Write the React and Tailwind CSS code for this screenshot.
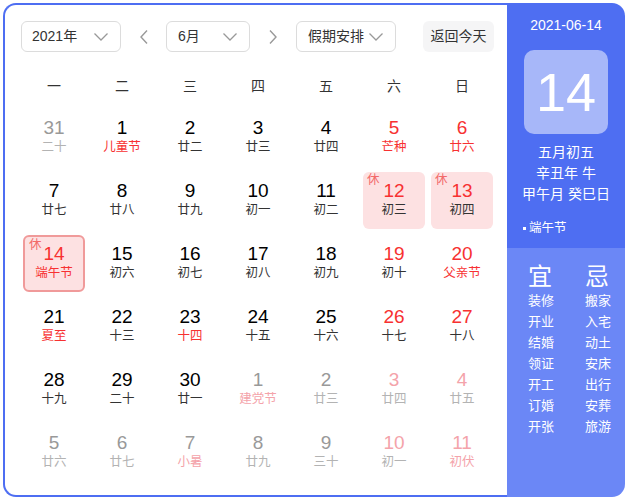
import React from "react";

const FONT = { fontFamily: "'Liberation Sans', 'Noto Sans CJK SC', sans-serif" };

const R = "text-[#f73131]";
const D = "text-[#333]";
const K = "text-[#000]";
const G = "text-[#999]";
const GL = "text-[#b3b3b3]";
const P = "text-[#f4a3aa]";

// [num, lunar, numColor, lunarColor, mark] mark: 'rest' | 'today'
const rows = [
  [["31", "二十", G, GL], ["1", "儿童节", K, R], ["2", "廿二", K, D], ["3", "廿三", K, D], ["4", "廿四", K, D], ["5", "芒种", R, R], ["6", "廿六", R, R]],
  [["7", "廿七", K, D], ["8", "廿八", K, D], ["9", "廿九", K, D], ["10", "初一", K, D], ["11", "初二", K, D], ["12", "初三", R, D, "rest"], ["13", "初四", R, D, "rest"]],
  [["14", "端午节", R, R, "today"], ["15", "初六", K, D], ["16", "初七", K, D], ["17", "初八", K, D], ["18", "初九", K, D], ["19", "初十", R, D], ["20", "父亲节", R, R]],
  [["21", "夏至", K, R], ["22", "十三", K, D], ["23", "十四", K, R], ["24", "十五", K, D], ["25", "十六", K, D], ["26", "十七", R, D], ["27", "十八", R, D]],
  [["28", "十九", K, D], ["29", "二十", K, D], ["30", "廿一", K, D], ["1", "建党节", G, P], ["2", "廿三", G, GL], ["3", "廿四", P, GL], ["4", "廿五", P, GL]],
  [["5", "廿六", G, GL], ["6", "廿七", G, GL], ["7", "小暑", G, P], ["8", "廿九", G, GL], ["9", "三十", G, GL], ["10", "初一", P, GL], ["11", "初伏", P, P]],
];

const weekdays = ["一", "二", "三", "四", "五", "六", "日"];
const yi = ["装修", "开业", "结婚", "领证", "开工", "订婚", "开张"];
const ji = ["搬家", "入宅", "动土", "安床", "出行", "安葬", "旅游"];

function Chevron({ className = "" }) {
  return (
    <svg width="16" height="10" viewBox="0 0 16 10" className={className} fill="none">
      <path d="M1.5 1.5 L8 8 L14.5 1.5" stroke="#999" strokeWidth="1.3" />
    </svg>
  );
}

function Arrow({ dir }) {
  return (
    <svg width="10" height="16" viewBox="0 0 10 16" fill="none">
      {dir === "left" ? (
        <path d="M8 1.5 L2 8 L8 14.5" stroke="#999" strokeWidth="1.4" />
      ) : (
        <path d="M2 1.5 L8 8 L2 14.5" stroke="#999" strokeWidth="1.4" />
      )}
    </svg>
  );
}

function Select({ label, w, pl }) {
  return (
    <div className={`flex items-center justify-between h-[31px] border border-[#dcdcdc] rounded-[6px] bg-white ${w} ${pl} pr-[11px]`}>
      <span className="text-[14px] text-[#333]">{label}</span>
      <Chevron />
    </div>
  );
}

function Cell({ c }) {
  const [num, lunar, nc, lc, mark] = c;
  let box = "";
  if (mark === "rest") box = "bg-[#fde1e2] rounded-[6px]";
  if (mark === "today") box = "bg-[#fde1e2] rounded-[6px] border-2 border-[#f09a9a]";
  return (
    <div className="h-[63px] p-[3px]">
      <div className={`relative h-full flex flex-col items-center justify-center ${box}`}>
        {mark && (
          <span className="absolute left-[4px] top-[0px] text-[12.5px] leading-[17px] text-[#f26a6a]">休</span>
        )}
        <span className={`text-[19px] leading-[22px] ${nc} ${mark === "today" ? "mt-[-2px]" : "mt-[-3px]"}`}>{num}</span>
        <span className={`text-[12.5px] leading-[17px] ${lc}`}>{lunar}</span>
      </div>
    </div>
  );
}

export default function App() {
  return (
    <div style={FONT} className="w-[627px] h-[500px] bg-white pl-[3px] pt-[3px]">
      <div className="flex w-[622px] h-[494px]">
        <div className="w-[504px] h-full border-l-2 border-t-2 border-b-2 border-[#4e6ef2] rounded-l-[13px] pl-[15px] pt-[16px]">
          <div className="flex items-center pl-[1px]">
            <Select label="2021年" w="w-[100px]" pl="pl-[10px]" />
            <div className="w-[45px] flex justify-center">
              <Arrow dir="left" />
            </div>
            <Select label="6月" w="w-[84px]" pl="pl-[11px]" />
            <div className="w-[46px] flex justify-center">
              <Arrow dir="right" />
            </div>
            <Select label="假期安排" w="w-[100px]" pl="pl-[11px]" />
            <div className="ml-[27px] h-[31px] w-[71px] rounded-[6px] bg-[#f5f5f6] flex items-center justify-center text-[14px] text-[#333]">
              返回今天
            </div>
          </div>
          <div className="grid grid-cols-7 w-[476px] mt-[14px]">
            {weekdays.map((w) => (
              <div key={w} className="h-[40px] flex items-center justify-center text-[14px] text-[#333]">
                {w}
              </div>
            ))}
            {rows.flat().map((c, i) => (
              <Cell key={i} c={c} />
            ))}
          </div>
        </div>
        <div className="w-[118px] h-full flex flex-col rounded-r-[13px] overflow-hidden text-white">
          <div className="h-[245px] bg-[#4e6ef2] flex flex-col items-center pt-[12px]">
            <div className="text-[14px] leading-[20px]">2021-06-14</div>
            <div className="mt-[15px] w-[84px] h-[84px] rounded-[10px] bg-white/50 flex items-center justify-center">
              <span className="text-[54px] leading-none">14</span>
            </div>
            <div className="mt-[8px] text-[14px] leading-[21px] text-center">
              <div>五月初五</div>
              <div>辛丑年 牛</div>
              <div>甲午月 癸巳日</div>
            </div>
            <div className="self-start ml-[16px] mt-[14px] text-[12.5px] leading-[18px] flex items-center">
              <span className="inline-block w-[3px] h-[3px] bg-white mr-[3px]"></span>
              端午节
            </div>
          </div>
          <div className="flex-1 bg-[#6b87f6] flex pl-[21px] pt-[16px]">
            <div className="w-[57px] flex flex-col">
              <div className="text-[24px] leading-[26px]">宜</div>
              {yi.map((t) => (
                <div key={t} className="text-[13px] leading-[21px]">{t}</div>
              ))}
            </div>
            <div className="flex flex-col">
              <div className="text-[24px] leading-[26px]">忌</div>
              {ji.map((t) => (
                <div key={t} className="text-[13px] leading-[21px]">{t}</div>
              ))}
            </div>
          </div>
        </div>
      </div>
    </div>
  );
}
